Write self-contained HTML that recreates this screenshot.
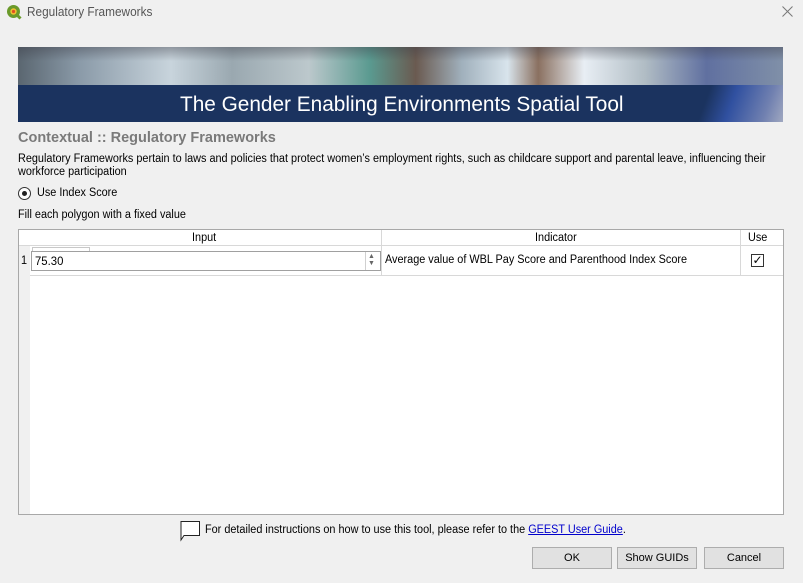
<!DOCTYPE html>
<html><head><meta charset="utf-8"><style>
*{margin:0;padding:0;box-sizing:border-box}
body{width:803px;height:583px;background:#f0f0f0;font-family:"Liberation Sans","DejaVu Sans",sans-serif;font-size:11px;color:#000;position:relative;overflow:hidden}
.a{position:absolute}
.t{font-size:11.5px;transform-origin:left top;transform:scaleX(0.945);white-space:nowrap}
</style></head><body>
<svg class="a" style="left:6px;top:4px" width="16" height="16" viewBox="0 0 16 16"><circle cx="7.5" cy="7.5" r="6.5" fill="#6a9a2a"/><circle cx="7.5" cy="7.5" r="3.2" fill="#f0c030"/><circle cx="7.5" cy="7.5" r="1.6" fill="#e05020"/><path d="M10 10 L14.5 14.5" stroke="#6a9a2a" stroke-width="3"/></svg>
<div class="a t" style="left:27px;top:5px;color:#555;font-size:12.5px">Regulatory Frameworks</div>
<svg class="a" style="left:782px;top:6px" width="11" height="11" viewBox="0 0 11 11"><path d="M0.5 0.5 L10.5 10.5 M10.5 0.5 L0.5 10.5" stroke="#777" stroke-width="1"/></svg>

<div class="a" style="left:18px;top:47px;width:765px;height:38px;background:linear-gradient(90deg,#5a6670 0%,#8a9aa8 8%,#c8d4dc 20%,#9aa8b0 28%,#bcc8cc 38%,#5a9a90 46%,#6a5a50 52%,#a0b0bc 58%,#d8e4ec 64%,#8a7060 68%,#e8eef4 74%,#b0bcc4 82%,#6070a0 90%,#8090a8 100%)"></div>
<div class="a" style="left:18px;top:47px;width:765px;height:14px;background:linear-gradient(180deg,rgba(60,60,70,.4),rgba(0,0,0,0))"></div>
<div class="a" style="left:18px;top:85px;width:765px;height:37px;background:#1b335f"></div>
<div class="a" style="left:690px;top:85px;width:93px;height:37px;background:linear-gradient(110deg,#1b335f 20%,#3050a0 45%,#7080b0 80%,#a0a8c0 100%)"></div>
<div class="a" style="left:180px;top:93px;color:#fff;font-size:20.8px;white-space:nowrap">The Gender Enabling Environments Spatial Tool</div>

<div class="a" style="left:18px;top:130px;font-size:14.5px;font-weight:bold;color:#7a7a7a;white-space:nowrap">Contextual :: Regulatory Frameworks</div>
<div class="a t" style="left:18px;top:153px;line-height:13px">Regulatory Frameworks pertain to laws and policies that protect women’s employment rights, such as childcare support and parental leave, influencing their<br>workforce participation</div>
<div class="a" style="left:18px;top:187px;width:13px;height:13px;border:1px solid #333;border-radius:50%;background:#fff"></div>
<div class="a" style="left:22px;top:191px;width:5px;height:5px;border-radius:50%;background:#222"></div>
<div class="a t" style="left:37px;top:187px">Use Index Score</div>
<div class="a t" style="left:18px;top:209px">Fill each polygon with a fixed value</div>

<div class="a" style="left:18px;top:229px;width:766px;height:286px;border:1px solid #a8a8a8;background:#fff"></div>
<div class="a" style="left:19px;top:230px;width:11px;height:284px;background:#f0f0f0"></div>
<div class="a" style="left:19px;top:230px;width:764px;height:16px;background:#fff;border-bottom:1px solid #d8d8d8"></div>
<div class="a" style="left:381px;top:230px;width:1px;height:16px;background:#d8d8d8"></div>
<div class="a" style="left:740px;top:230px;width:1px;height:16px;background:#d8d8d8"></div>
<div class="a t" style="left:192px;top:232px">Input</div>
<div class="a t" style="left:535px;top:232px">Indicator</div>
<div class="a t" style="left:748px;top:232px">Use</div>
<div class="a" style="left:30px;top:275px;width:753px;height:1px;background:#d8d8d8"></div>
<div class="a" style="left:381px;top:246px;width:1px;height:30px;background:#d8d8d8"></div>
<div class="a" style="left:740px;top:246px;width:1px;height:30px;background:#d8d8d8"></div>
<div class="a t" style="left:21px;top:255px">1</div>
<div class="a" style="left:31px;top:251px;width:350px;height:20px;border:1px solid #a0a0a0;background:#fff"></div>
<div class="a" style="left:365px;top:252px;width:1px;height:18px;background:#d0d0d0"></div>
<div class="a" style="left:368px;top:253px;font-size:7px;color:#666;line-height:7px">▲<br>▼</div>
<div class="a" style="left:32px;top:247px;width:58px;height:4px;border:1px solid #c8c8c8;border-bottom:none"></div>
<div class="a t" style="left:35px;top:254px;font-size:12px">75.30</div>
<div class="a t" style="left:385px;top:254px">Average value of WBL Pay Score and Parenthood Index Score</div>
<div class="a" style="left:751px;top:254px;width:13px;height:13px;border:1px solid #333;background:#fff;font-size:12px;line-height:11px;text-align:center;font-weight:bold">✓</div>

<svg class="a" style="left:179px;top:520px" width="22" height="22" viewBox="0 0 22 22"><path d="M1.5 1.5 H20.5 V15.5 H5 L2 20 V1.5 Z" fill="#fff" stroke="#222" stroke-width="1"/></svg>
<div class="a t" style="left:205px;top:524px">For detailed instructions on how to use this tool, please refer to the <span style="color:#0000cc;text-decoration:underline">GEEST User Guide</span>.</div>

<div class="a" style="left:532px;top:547px;width:80px;height:22px;border:1px solid #adadad;background:#e1e1e1;text-align:center;line-height:20px">OK</div>
<div class="a" style="left:617px;top:547px;width:80px;height:22px;border:1px solid #adadad;background:#e1e1e1;text-align:center;line-height:20px">Show GUIDs</div>
<div class="a" style="left:704px;top:547px;width:80px;height:22px;border:1px solid #adadad;background:#e1e1e1;text-align:center;line-height:20px">Cancel</div>
</body></html>
